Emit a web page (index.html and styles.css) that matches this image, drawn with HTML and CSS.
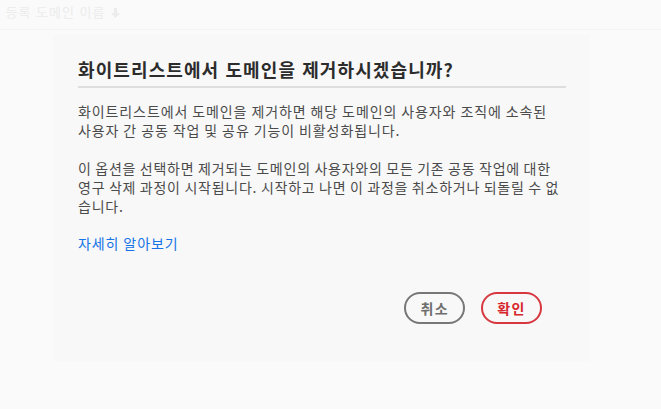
FILE: index.html
```html
<!DOCTYPE html>
<html lang="ko">
<head>
<meta charset="utf-8">
<link rel="stylesheet" href="styles.css">
</head>
<body>
<div class="backdrop-header">
  <span class="bh-text">도메인 등록 도메인 이름</span>
  <svg class="bh-icon" width="9" height="10" viewBox="0 0 9 10"><path d="M3 0h3v5h3L4.5 10 0 5h3z" fill="#ececec"/></svg>
</div>
<div class="dialog">
  <h1 class="title">화이트리스트에서 도메인을 제거하시겠습니까?</h1>
  <p class="para para-keep">화이트리스트에서 도메인을 제거하면 해당 도메인의 사용자와 조직에 소속된 사용자 간 공동 작업 및 공유 기능이 비활성화됩니다.</p>
  <p class="para para-lines">이 옵션을 선택하면 제거되는 도메인의 사용자와의 모든 기존 공동 작업에 대한<br>영구 삭제 과정이 시작됩니다. 시작하고 나면 이 과정을 취소하거나 되돌릴 수 없<br>습니다.</p>
  <a class="link" href="#">자세히 알아보기</a>
  <div class="actions">
    <button class="btn btn-cancel">취소</button>
    <button class="btn btn-ok">확인</button>
  </div>
</div>
</body>
</html>
```

FILE: styles.css
```css
html, body {
  margin: 0;
  padding: 0;
  background: #fafafa;
  font-family: "Noto Sans CJK KR", "Noto Sans", sans-serif;
  overflow: hidden;
}
.backdrop-header {
  height: 29px;
  border-bottom: 1px solid #f3f3f3;
  display: flex;
  align-items: center;
  gap: 5px;
  margin-left: -38px;
}
.bh-text {
  font-size: 13px;
  letter-spacing: 1px;
  color: #ececec;
  line-height: 1;
  margin-top: -6px;
}
.bh-icon {
  margin-top: -4px;
}
.dialog {
  margin-left: 53px;
  width: 537px;
  height: 326px;
  margin-top: 5px;
  background: #f8f8f8;
  box-sizing: border-box;
  padding: 21px 24px 0 25px;
}
.title {
  margin: 0;
  font-size: 18px;
  font-weight: 700;
  letter-spacing: 1.1px;
  color: #2c2c2c;
  line-height: 26px;
  padding-bottom: 4px;
  border-bottom: 2px solid #dedede;
}
.para {
  margin: 19px 0 0;
  font-size: 14px;
  letter-spacing: 0.9px;
  word-spacing: -0.8px;
  line-height: 19px;
  color: #4b4b4b;
}
.para-keep {
  margin-top: 14px;
  word-break: keep-all;
}
.para-lines {
  white-space: nowrap;
  letter-spacing: 0.75px;
  word-spacing: -1px;
}
.link {
  display: inline-block;
  margin-top: 18px;
  font-size: 14px;
  letter-spacing: 0.9px;
  word-spacing: -0.8px;
  line-height: 19px;
  color: #1473e6;
  text-decoration: none;
}
.actions {
  display: flex;
  justify-content: flex-end;
  gap: 16px;
  margin-top: 38px;
  padding-right: 24px;
}
.btn {
  height: 32px;
  padding: 0 14px;
  border-radius: 16px;
  background: transparent;
  font-family: inherit;
  font-size: 14px;
  font-weight: 700;
  letter-spacing: 1.5px;
  box-sizing: border-box;
  line-height: 1;
}
.btn-cancel {
  border: 2px solid #777777;
  color: #6e6e6e;
}
.btn-ok {
  border: 2px solid #d7373f;
  color: #d7262d;
}
```
